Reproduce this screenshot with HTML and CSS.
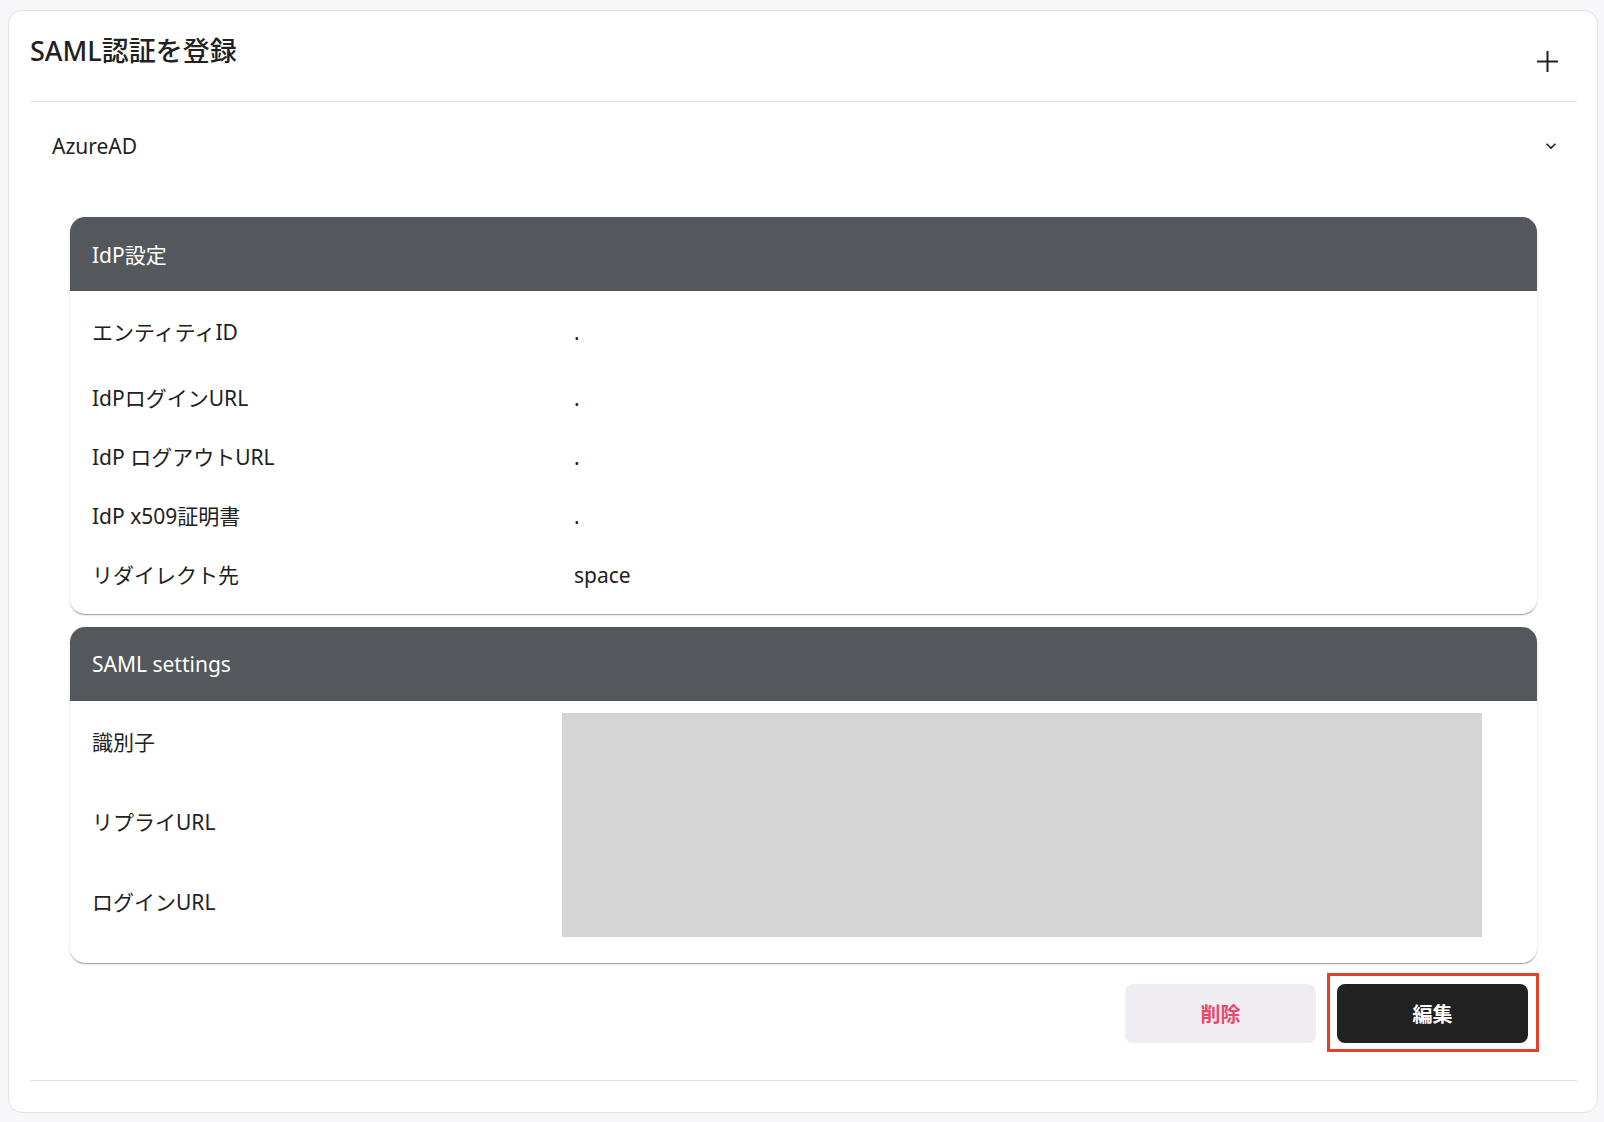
FILE: index.html
```html
<!DOCTYPE html>
<html>
	<head>
		<meta charset="utf-8">
		<title>SAML認証を登録</title>
		<link rel="stylesheet" href="styles.css">
	</head>
	<body>
		<div class="card">
			<div class="card-head">
				<h1 class="title">SAML認証を登録</h1>
				<button class="add-btn">
					<svg width="21" height="21" viewBox="0 0 21 21"><path d="M10.5 0v21M0 10.5h21" stroke="#212121" stroke-width="2" fill="none"/></svg>
				</button>
			</div>
			<div class="accordion">
				<div class="summary">
					<span class="summary-name">AzureAD</span>
					<svg class="expand" width="20" height="20" viewBox="0 0 24 24"><path d="M16.59 8.59 12 13.17 7.41 8.59 6 10l6 6 6-6z" fill="#212121"/></svg>
				</div>
				<div class="details">
					<section class="panel">
						<div class="panel-head">IdP設定</div>
						<div class="panel-body idp">
							<div class="row"><div class="label">エンティティID</div><div class="value">.</div></div>
							<div class="row"><div class="label">IdPログインURL</div><div class="value">.</div></div>
							<div class="row"><div class="label">IdP ログアウトURL</div><div class="value">.</div></div>
							<div class="row"><div class="label">IdP x509証明書</div><div class="value">.</div></div>
							<div class="row"><div class="label">リダイレクト先</div><div class="value">space</div></div>
						</div>
					</section>
					<section class="panel">
						<div class="panel-head">SAML settings</div>
						<div class="panel-body saml">
							<div class="labels">
								<div class="label-cell">識別子</div>
								<div class="label-cell">リプライURL</div>
								<div class="label-cell">ログインURL</div>
							</div>
							<div class="redacted"></div>
						</div>
					</section>
					<div class="actions">
						<button class="btn btn-delete">削除</button>
						<button class="btn btn-edit">編集</button>
					</div>
				</div>
			</div>
		</div>
	</body>
</html>
```

FILE: styles.css
```css
* {
	margin: 0;
	padding: 0;
	box-sizing: border-box;
}
body {
	background-color: #f7f7f9;
	padding: 10px 6px 9px 8px;
	font-family: "Noto Sans", "Noto Sans CJK JP", sans-serif;
	color: #212121;
}
.card {
	background-color: #fff;
	border: 1px solid #e2e2e5;
	border-radius: 14px;
	padding: 0 20px 31px 21px;
}
.card-head {
	height: 91px;
	border-bottom: 1px solid #e0e0e0;
	display: flex;
	justify-content: space-between;
	align-items: flex-start;
}
.title {
	font-size: 27px;
	font-weight: 500;
	line-height: 40px;
	padding-top: 20px;
}
.add-btn {
	border: 0;
	background: none;
	width: 21px;
	height: 21px;
	margin: 40px 19px 0 0;
}
.add-btn svg {
	display: block;
}
.accordion {
	border-bottom: 1px solid #e0e0e0;
	padding-bottom: 37px;
}
.summary {
	height: 88px;
	display: flex;
	align-items: center;
	justify-content: space-between;
	padding: 0 16px 0 22px;
}
.summary-name {
	font-size: 21px;
}
.expand {
	display: block;
}
.details {
	padding: 27px 40px 0;
}
.panel {
	background-color: #fff;
	border-radius: 15px;
	overflow: hidden;
	box-shadow: 0 2px 1px -1px rgba(0, 0, 0, .2), 0 1px 1px 0 rgba(0, 0, 0, .14), 0 1px 3px 0 rgba(0, 0, 0, .12);
}
.panel + .panel {
	margin-top: 13px;
}
.panel-head {
	height: 74px;
	background-color: #54575c;
	color: #fff;
	font-size: 21px;
	display: flex;
	align-items: center;
	padding: 0 22px;
}
.panel-body {
	font-size: 21px;
	line-height: 1.5;
}
.idp {
	padding: 12px 0 9px 22px;
}
.idp .row {
	height: 59px;
	display: flex;
	align-items: center;
}
.idp .row:first-child {
	margin-bottom: 7px;
}
.idp .label {
	width: 470px;
}
.idp .value {
	padding-left: 12px;
}
.saml {
	display: flex;
	padding: 2px 0 20px 22px;
}
.saml .labels {
	width: 470px;
}
.saml .label-cell {
	height: 80px;
	display: flex;
	align-items: center;
}
.redacted {
	width: 920px;
	height: 224px;
	margin-top: 10px;
	background-color: #d5d5d5;
}
.actions {
	display: flex;
	justify-content: flex-end;
	gap: 21px;
	margin-top: 21px;
	padding-right: 9px;
}
.btn {
	width: 191px;
	height: 59px;
	border: 0;
	border-radius: 8px;
	font-family: inherit;
	font-size: 20px;
	font-weight: 700;
	cursor: pointer;
}
.btn-delete {
	background-color: #efedf2;
	color: #e9486c;
}
.btn-edit {
	background-color: #212121;
	color: #fff;
	position: relative;
}
/* 強調枠 */
.btn-edit::after {
	content: "";
	position: absolute;
	top: -11px;
	right: -11px;
	bottom: -9px;
	left: -10px;
	border: 3px solid #e5402b;
}
```
